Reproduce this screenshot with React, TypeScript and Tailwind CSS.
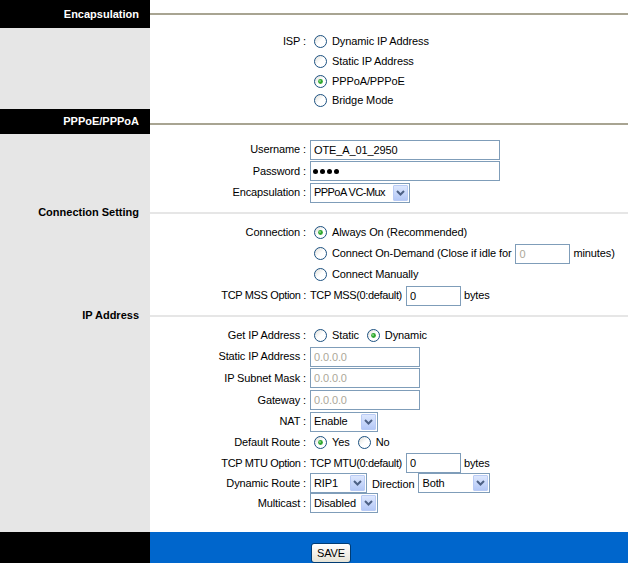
import { useId, type ReactNode } from "react";

function Radio({ checked = false }: { checked?: boolean }) {
  const id = useId();
  return (
    <svg width="13" height="13" viewBox="0 0 13 13" className="shrink-0">
      <defs>
        <linearGradient id={id} x1="0" y1="0" x2="1" y2="1">
          <stop offset="0" stopColor="#dcdbd4" />
          <stop offset="0.5" stopColor="#ffffff" />
          <stop offset="1" stopColor="#ffffff" />
        </linearGradient>
      </defs>
      <circle cx="6.5" cy="6.5" r="6" fill={`url(#${id})`} stroke="#1c5180" strokeWidth="1" />
      {checked && <circle cx="6.5" cy="6.5" r="2.4" fill="#2fa52f" />}
      {checked && <circle cx="6" cy="6" r="0.9" fill="#8de08a" />}
    </svg>
  );
}

function Option({ checked, children, className = "" }: { checked?: boolean; children: ReactNode; className?: string }) {
  return (
    <span className={`flex items-center gap-[5px] ${className}`}>
      <Radio checked={checked} />
      <span>{children}</span>
    </span>
  );
}

function TextBox({ value, width, muted = false }: { value: string; width: string; muted?: boolean }) {
  return (
    <input
      readOnly
      defaultValue={value}
      className={`h-[20px] ${width} border border-[#7f9db9] bg-white px-[3px] text-[11px] outline-none ${
        muted ? "text-[#aca899]" : "text-black"
      }`}
    />
  );
}

function Select({ value, width, tight = false }: { value: string; width: string; tight?: boolean }) {
  return (
    <div className={`flex h-[20px] ${width} items-center border border-[#7f9db9] bg-white`}>
      <span className={`flex-1 overflow-hidden whitespace-nowrap pl-[3px] ${tight ? "tracking-[-0.55px]" : ""}`}>
        {value}
      </span>
      <span className="m-px flex h-[16px] w-[15px] shrink-0 items-center justify-center rounded-[1px] border border-[#b9cbf5] bg-linear-to-b from-[#dde7fd] to-[#b4c8f7]">
        <svg width="9" height="6" viewBox="0 0 9 6">
          <path d="M1 1 L4.5 4.5 L8 1" fill="none" stroke="#4d6185" strokeWidth="2" />
        </svg>
      </span>
    </div>
  );
}

function Header({ title, h, pt }: { title: string; h: string; pt: string }) {
  return (
    <div className={`flex ${h}`}>
      <div className="flex w-[150px] shrink-0 items-center justify-end bg-black pr-[11px] font-bold tracking-normal text-white">
        {title}
      </div>
      <div className={`flex-1 bg-white ${pt}`}>
        <div className="h-[2px] w-full bg-[#a8a492]" />
      </div>
    </div>
  );
}

function Row({ h, label, side, line, children }: { h: string; label?: ReactNode; side?: string; line?: boolean; children?: ReactNode }) {
  return (
    <div className={`flex ${h}`}>
      <div className="flex w-[150px] shrink-0 items-center justify-end bg-[#e6e6e6] pr-[11px] font-bold tracking-normal text-black">
        {side}
      </div>
      <div className="flex flex-1 items-center bg-white">
        {line ? (
          <div className="h-[2px] w-full bg-[#e6e6e6]" />
        ) : (
          <>
            <div className="w-[160px] shrink-0 pr-[4px] text-right">{label}</div>
            <div className="flex items-center whitespace-nowrap">{children}</div>
          </>
        )}
      </div>
    </div>
  );
}

export default function App() {
  return (
    <div className="w-[628px] bg-white font-['Liberation_Sans',Arial,sans-serif] text-[11px] leading-[13px] tracking-[-0.11px] text-black">
      <Header title="Encapsulation" h="h-[28px]" pt="pt-[13px]" />
      <div className="flex h-[3px]">
        <div className="w-[150px] bg-[#e6e6e6]" />
      </div>
      <Row h="h-[20px]" label="ISP :">
        <Option className="ml-[4px]">Dynamic IP Address</Option>
      </Row>
      <Row h="h-[20px]">
        <Option className="ml-[4px]">Static IP Address</Option>
      </Row>
      <Row h="h-[20px]">
        <Option className="ml-[4px]" checked>PPPoA/PPPoE</Option>
      </Row>
      <Row h="h-[18px]">
        <Option className="ml-[4px]">Bridge Mode</Option>
      </Row>

      <Header title="PPPoE/PPPoA" h="h-[25px]" pt="pt-[14px]" />
      <div className="flex h-[5px]">
        <div className="w-[150px] bg-[#e6e6e6]" />
      </div>
      <Row h="h-[21px]" label="Username :">
        <TextBox value="OTE_A_01_2950" width="w-[190px]" />
      </Row>
      <Row h="h-[22px]" label="Password :">
        <div className="flex h-[20px] w-[190px] items-center gap-[2px] border border-[#7f9db9] bg-white pl-[2px]">
          <span className="h-[5px] w-[5px] rounded-full bg-black" />
          <span className="h-[5px] w-[5px] rounded-full bg-black" />
          <span className="h-[5px] w-[5px] rounded-full bg-black" />
          <span className="h-[5px] w-[5px] rounded-full bg-black" />
        </div>
      </Row>
      <Row h="h-[21px]" label="Encapsulation :">
        <Select value="PPPoA VC-Mux" width="w-[100px]" tight />
      </Row>
      <Row h="h-[19px]" side="Connection Setting" line />
      <Row h="h-[21px]" label="Connection :">
        <Option className="ml-[4px]" checked>Always On (Recommended)</Option>
      </Row>
      <Row h="h-[21px]">
        <Option className="ml-[4px]">Connect On-Demand (Close if idle for</Option>
        <span className="ml-[4px]">
          <TextBox value="0" width="w-[55px]" muted />
        </span>
        <span className="ml-[3px]">minutes)</span>
      </Row>
      <Row h="h-[21px]">
        <Option className="ml-[4px]">Connect Manually</Option>
      </Row>
      <Row h="h-[21px]" label={<span className="tracking-[-0.35px]">TCP MSS Option :</span>}>
        <span className="tracking-[-0.35px]">TCP MSS(0:default)</span>
        <span className="ml-[4px]">
          <TextBox value="0" width="w-[55px]" />
        </span>
        <span className="ml-[3px]">bytes</span>
      </Row>
      <Row h="h-[19px]" side="IP Address" line />
      <Row h="h-[21px]" label="Get IP Address :">
        <Option className="ml-[4px]">Static</Option>
        <Option className="ml-[8px]" checked>Dynamic</Option>
      </Row>
      <Row h="h-[21px]" label="Static IP Address :">
        <TextBox value="0.0.0.0" width="w-[110px]" muted />
      </Row>
      <Row h="h-[22px]" label="IP Subnet Mask :">
        <TextBox value="0.0.0.0" width="w-[110px]" muted />
      </Row>
      <Row h="h-[22px]" label="Gateway :">
        <TextBox value="0.0.0.0" width="w-[110px]" muted />
      </Row>
      <Row h="h-[21px]" label="NAT :">
        <Select value="Enable" width="w-[68px]" />
      </Row>
      <Row h="h-[21px]" label="Default Route :">
        <Option className="ml-[4px]" checked>Yes</Option>
        <Option className="ml-[8px]">No</Option>
      </Row>
      <Row h="h-[20px]" label={<span className="tracking-[-0.35px]">TCP MTU Option :</span>}>
        <span className="tracking-[-0.35px]">TCP MTU(0:default)</span>
        <span className="ml-[4px]">
          <TextBox value="0" width="w-[55px]" />
        </span>
        <span className="ml-[3px]">bytes</span>
      </Row>
      <Row h="h-[20px]" label="Dynamic Route :">
        <Select value="RIP1" width="w-[57px]" />
        <span className="ml-[5px] mt-[3px]">Direction</span>
        <span className="ml-[4px]">
          <Select value="Both" width="w-[72px]" />
        </span>
      </Row>
      <Row h="h-[20px]" label="Multicast :">
        <Select value="Disabled" width="w-[68px]" />
      </Row>
      <Row h="h-[19px]" />

      <div className="flex h-[31px]">
        <div className="w-[150px] shrink-0 bg-black" />
        <div className="flex-1 bg-[#0066cc] pl-[161px] pt-[11px]">
          <button className="h-[20px] w-[40px] rounded-[3px] border border-[#003c74] bg-linear-to-b from-white to-[#e6e3d6] text-[11px] text-black">
            SAVE
          </button>
        </div>
      </div>
    </div>
  );
}
